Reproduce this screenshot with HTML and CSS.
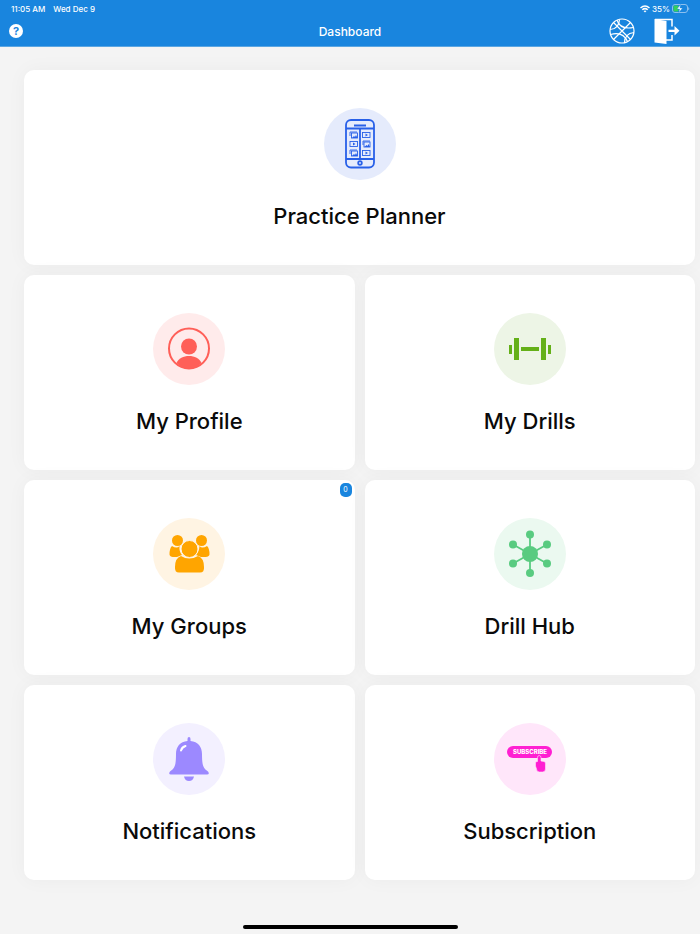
FILE: index.html
```html
<!DOCTYPE html>
<html lang="en">
<head>
  <meta charset="UTF-8">
  <meta name="viewport" content="width=device-width, initial-scale=1.0">
  <title>Dashboard</title>
  <link rel="stylesheet" href="styles.css">
</head>
<body>
  <header class="topbar">
    <div class="status">
      <span>11:05 AM</span>
      <span>Wed Dec 9</span>
      <span class="status-right">
        <svg width="10" height="8" viewBox="0 0 20 16" fill="none" stroke="#fff" stroke-width="3">
          <path d="M1 6Q10-2 19 6M4.500 9.500Q10 5 15.500 9.500"/>
          <path d="M7 12Q10 10 13 12L10 15z" fill="#fff" stroke="none"/>
        </svg>
        <span>35%</span>
        <svg width="18" height="10" viewBox="0 0 18 10">
          <rect x="0.500" y="0.500" width="15" height="8" rx="2.500" fill="none" stroke="#8cc0ef"/>
          <rect x="1.500" y="1.500" width="5" height="6" rx="1" fill="#35d05a"/>
          <path d="M16.500 3.500v2.500q1-1.200 0-2.500" fill="#8cc0ef" stroke="#8cc0ef" stroke-width="0.500"/>
          <path d="M8.500 0.500L5 5h2.500L7 8.500L10.500 4H8z" fill="#fff" stroke="#1985de" stroke-width="0.400"/>
        </svg>
      </span>
    </div>
    <nav class="navbar">
      <div class="nav-side">
        <button class="icon-button help" type="button" aria-label="Help">?</button>
      </div>
      <h1>Dashboard</h1>
      <div class="nav-side nav-end">
        <button class="icon-button" type="button" aria-label="Basketball">
          <svg width="26" height="26" viewBox="0 0 26 26" fill="none" stroke="#fff" stroke-width="1.200">
            <circle cx="13" cy="13" r="12"/>
            <path d="M4.500 4.500L21.500 21.500M21.500 4.500L4.500 21.500"/>
            <path d="M1 11.500Q10 11 10.500 1.500M15.500 25Q15.500 15.500 25 14.500"/>
            <path d="M8 2Q11 12 24.500 9.500M1.500 16.500Q14 13 18.500 23.500"/>
          </svg>
        </button>
        <button class="icon-button" type="button" aria-label="Log out">
          <svg width="26" height="26" viewBox="0 0 26 26">
            <path d="M0.500 1L12.500 3V26L0.500 24.500z" fill="#fff"/>
            <path d="M1 1.500H18V8.500M18 17V22H12" fill="none" stroke="#fff" stroke-width="1.500"/>
            <path d="M14.500 11.700H20.500V8L25.500 12.800L20.500 17.500V14H14.500z" fill="#fff"/>
          </svg>
        </button>
      </div>
    </nav>
  </header>

  <main class="dashboard">
    <a class="card card-wide" href="#planner">
      <span class="icon blue">
        <svg width="72" height="72" viewBox="0 0 72 72" fill="none" stroke="#2860e8" stroke-width="1.800">
          <rect x="22" y="12" width="28" height="47.500" rx="5"/>
          <path d="M22 20.500H50M22 51H50M36 20.500V51M30 17.500H42" />
          <circle cx="36" cy="55" r="1.800"/>
          <g stroke-width="0.900">
            <path d="M26 28V24H33M26 46V42H33M39 37V33H46"/>
            <rect x="27.500" y="25" width="6" height="5"/>
            <rect x="38.500" y="24.500" width="7.500" height="5"/>
            <rect x="26" y="33.500" width="7.500" height="5"/>
            <rect x="40" y="34" width="6" height="5"/>
            <rect x="27.500" y="43" width="6" height="5"/>
            <rect x="38.500" y="42.500" width="7.500" height="5"/>
          </g>
          <g fill="#2860e8" stroke="none">
            <path d="M28 30l2-2 1 1 1-2 1.500 3zM40.500 39l2-2 1 1 1-2 1.500 3zM28 48l2-2 1 1 1-2 1.500 3z"/>
            <path d="M41.500 25.500l2.500 1.500-2.500 1.500zM29 34.500l2.500 1.500-2.500 1.500zM41.500 43.500l2.500 1.500-2.500 1.500z"/>
          </g>
        </svg>
      </span>
      <span class="title">Practice Planner</span>
    </a>

    <a class="card" href="#profile">
      <span class="icon red">
        <svg width="72" height="72" viewBox="0 0 72 72" fill="#ff5f58">
          <circle cx="36" cy="35.500" r="20" fill="none" stroke="#ff5f58" stroke-width="2"/>
          <circle cx="36" cy="33.500" r="8"/>
          <path d="M23.500 50C27 40.500 45 40.500 48.500 50Q43 56 36 56T23.500 50z"/>
        </svg>
      </span>
      <span class="title">My Profile</span>
    </a>

    <a class="card" href="#drills">
      <span class="icon green">
        <svg width="72" height="72" viewBox="0 0 72 72" fill="#64b018">
          <path d="M15 32h3v9h-3zM20 25h5v22h-5zM27 34h18v4H27zM47 25h5v22h-5zM54 32h3v9h-3z"/>
        </svg>
      </span>
      <span class="title">My Drills</span>
    </a>

    <a class="card" href="#groups">
      <span class="badge">0</span>
      <span class="icon orange">
        <svg width="72" height="72" viewBox="0 0 72 72" fill="#ffa500">
          <circle cx="24.500" cy="22.500" r="5.500"/>
          <circle cx="48.500" cy="22.500" r="5.500"/>
          <path d="M19 28Q24 31 26.500 28Q26 34 29 37L24 39Q16.500 39.500 16.500 36.500Q16.500 30 19 28z"/>
          <path d="M54 28Q49 31 46.500 28Q46 34 43 37L48 39Q56.500 39.500 56.500 36.500Q56.500 30 54 28z"/>
          <circle cx="36.500" cy="31" r="8.500" stroke="#fff4e3"/>
          <path d="M28 38Q36 43 45 38Q51 40 51 49Q51.500 54.500 47 54.500H26Q21.500 54.500 22 49Q22 40 28 38z"/>
        </svg>
      </span>
      <span class="title">My Groups</span>
    </a>

    <a class="card" href="#hub">
      <span class="icon mint">
        <svg width="72" height="72" viewBox="0 0 72 72" fill="#59cb80">
          <path d="M36 17V55M19 26.500L53 45.500M53 26.500L19 45.500" stroke="#59cb80" stroke-width="1.800"/>
          <circle cx="36" cy="36" r="8"/>
          <circle cx="36" cy="16.500" r="4"/>
          <circle cx="36" cy="55" r="4"/>
          <circle cx="19" cy="26.500" r="4"/>
          <circle cx="53" cy="26.500" r="4"/>
          <circle cx="19" cy="45.500" r="4"/>
          <circle cx="53" cy="45.500" r="4"/>
        </svg>
      </span>
      <span class="title">Drill Hub</span>
    </a>

    <a class="card" href="#notifications">
      <span class="icon purple">
        <svg width="72" height="72" viewBox="0 0 72 72" fill="#9c89ff">
          <path d="M34.500 18V16Q34.500 14 36 14T37.500 16V18C45 18.500 49 24 49 31C49 42 50 45 55 48.500Q57 51.500 54 51.500H18Q15 51.500 17 48.500C22 45 23 42 23 31C23 24 27 18.500 34.500 18z"/>
          <path d="M31 53.500H41Q40 58 36 58T31 53.500z"/>
          <path d="M28 27.500Q29 24 32.500 23" fill="none" stroke="#fff" stroke-width="2" stroke-linecap="round"/>
        </svg>
      </span>
      <span class="title">Notifications</span>
    </a>

    <a class="card" href="#subscription">
      <span class="icon pink">
        <svg width="72" height="72" viewBox="0 0 72 72" fill="#ff1fd2">
          <rect x="13" y="23" width="45" height="12" rx="6"/>
          <text class="pill-text" x="36" y="31" text-anchor="middle">SUBSCRIBE</text>
          <path d="M43.500 34.500Q43.500 32.500 45.200 32.500T47 34.500V38L50 38.500Q52 39 51.500 42V46Q51.500 49 48.500 49H45.500Q42.500 49 42.500 46L41.500 43V39L43.500 38.500z" stroke="#ffe6fa" stroke-width="0.600"/>
        </svg>
      </span>
      <span class="title">Subscription</span>
    </a>
  </main>

  <footer class="home-indicator"></footer>
</body>
</html>
```
FILE: styles.css
```css
* {
  box-sizing: border-box;
}
body {
  display: flex;
  flex-direction: column;
  min-height: 100vh;
  margin: 0;
  background: #f4f4f4;
  color: #0a0a0a;
  font-family: Inter, sans-serif;
}
.topbar {
  height: 47px;
  background: #1985de;
  border-bottom: 1px solid #5ba6e2;
  color: #fff;
}
.status {
  display: flex;
  align-items: center;
  gap: 8px;
  height: 16px;
  padding: 1px 10px 0 11px;
  font-size: 8px;
  font-weight: 500;
}
.status-right {
  display: flex;
  align-items: center;
  gap: 2px;
  margin-left: auto;
}
.navbar {
  display: flex;
  align-items: center;
  height: 30px;
}
.nav-side {
  display: flex;
  flex: 1;
  padding: 0 20px 0 9px;
}
.nav-end {
  justify-content: flex-end;
  gap: 19px;
}
h1 {
  margin: 0;
  font-family: Inter, sans-serif;
  font-size: 12px;
  font-weight: 500;
}
.icon-button {
  display: flex;
  padding: 0;
  border: none;
  background: none;
  cursor: pointer;
}
.help {
  align-items: center;
  justify-content: center;
  width: 14px;
  height: 14px;
  border-radius: 50%;
  background: #fff;
  color: #1985de;
  font-family: Inter, sans-serif;
  font-size: 11px;
  font-weight: 700;
}
.dashboard {
  display: grid;
  grid-template-columns: 1fr 1fr;
  gap: 10px;
  padding: 23px 5px 0 24px;
}
.card {
  position: relative;
  display: flex;
  flex-direction: column;
  align-items: center;
  gap: 20px;
  padding: 38px 16px 33px;
  border-radius: 10px;
  background: #fff;
  box-shadow: 0 0 20px rgba(0, 0, 0, 0.04);
  color: inherit;
  text-decoration: none;
}
.card-wide {
  grid-column: span 2;
}
.icon {
  width: 72px;
  height: 72px;
  border-radius: 50%;
}
.icon svg {
  display: block;
}
.title {
  font-size: 22px;
  font-weight: 500;
  line-height: 32px;
}
.badge {
  position: absolute;
  top: 3px;
  right: 3px;
  width: 12px;
  border-radius: 5px;
  background: #1985de;
  color: #fff;
  font-size: 7px;
  line-height: 14px;
  text-align: center;
}
.blue {
  background: #e5ebfc;
}
.red {
  background: #ffebeb;
}
.green {
  background: #edf5e6;
}
.orange {
  background: #fff4e3;
}
.mint {
  background: #ebf9f0;
}
.purple {
  background: #f3f0ff;
}
.pink {
  background: #ffe6fa;
}
.pill-text {
  fill: #fff;
  font-size: 6px;
  font-weight: 800;
}
.home-indicator {
  width: 215px;
  height: 4px;
  margin: auto auto 5px;
  border-radius: 2px;
  background: #000;
}
```
